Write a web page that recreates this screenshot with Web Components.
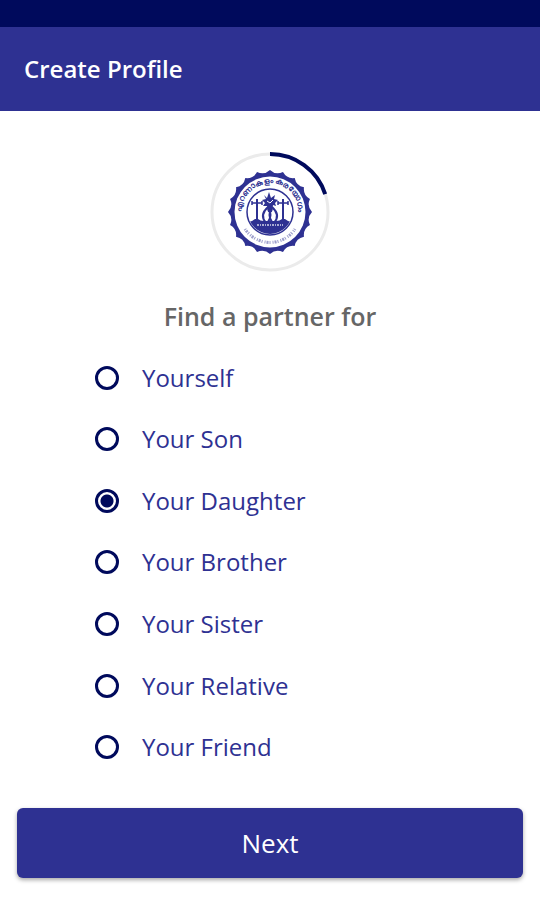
<!DOCTYPE html>
<html lang="en">
<head>
<meta charset="utf-8">
<meta name="viewport" content="width=device-width, initial-scale=1">
<title>Create Profile</title>
<style>
html, body {
  height: 100%;
}

body {
  margin: 0;
  background: #fff;
  font-family: "Open Sans", "Noto Sans", sans-serif;
}
</style>
</head>
<body>
<profile-page>
  <app-bar slot="header">Create Profile</app-bar>
  <progress-seal></progress-seal>
  <partner-form legend="Find a partner for">
    <radio-option>Yourself</radio-option>
    <radio-option>Your Son</radio-option>
    <radio-option checked>Your Daughter</radio-option>
    <radio-option>Your Brother</radio-option>
    <radio-option>Your Sister</radio-option>
    <radio-option>Your Relative</radio-option>
    <radio-option>Your Friend</radio-option>
  </partner-form>
  <primary-button slot="footer">Next</primary-button>
</profile-page>

<script>
class BaseElement extends HTMLElement {
  constructor() {
    super();
    const template = document.createElement('template');
    template.innerHTML = this.constructor.html;
    this.attachShadow({mode: 'open'});
    this.shadowRoot.appendChild(template.content.cloneNode(true));
  }
}

class ProfilePage extends BaseElement {
  static html = `
<style>
:host {
  display: flex;
  flex-direction: column;
  min-height: 100%;
  --primary: #2e3192;
  --primary-dark: #000a5c;
}

main {
  display: flex;
  flex: 1;
  flex-direction: column;
  padding-top: 41px;
}

footer {
  padding: 30px 17px 22px;
}
</style>
<slot name="header"></slot>
<main><slot></slot></main>
<footer><slot name="footer"></slot></footer>
`;
}

class AppBar extends BaseElement {
  static html = `
<style>
:host {
  display: block;
  background: var(--primary);
  border-top: 27px solid var(--primary-dark);
}

header {
  display: flex;
  align-items: center;
  padding: 26px 24px;
}

h1 {
  margin: 0;
  color: #fff;
  font-size: 24px;
  font-weight: 600;
  line-height: 32px;
}
</style>
<header><h1><slot></slot></h1></header>
`;
}

class ProgressSeal extends BaseElement {
  static html = `
<style>
:host {
  display: flex;
  justify-content: center;
}

svg {
  width: 120px;
  height: 120px;
  fill: none;
}

text {
  fill: var(--primary);
  font-size: 8px;
  font-weight: 700;
}
</style>
<svg viewBox="-60 -60 120 120" role="img" aria-label="Profile 20% complete">
  <defs>
    <path id="arc" d="M-27 9 A28.500 28.500 0 1 1 27 9"/>
    <clipPath id="disc"><circle r="22"/></clipPath>
  </defs>
  <circle r="58" stroke="#ebebeb" stroke-width="3"/>
  <path d="M0 -58 A58 58 0 0 1 55.200 -17.900" stroke="var(--primary-dark)" stroke-width="4"/>
  <path id="edge" fill="var(--primary)"/>
  <circle r="35.500" fill="#fff"/>
  <text><textPath href="#arc" startOffset="50%" text-anchor="middle">എറണാകുളം കരയോഗം</textPath></text>
  <path d="M-25 17 A30 30 0 0 0 25 17" stroke="#9c9ecb" stroke-width="3" stroke-dasharray="1 1 2 1 1 2"/>
  <circle r="23" fill="#fff" stroke="var(--primary)" stroke-width="1.500"/>
  <g clip-path="url(#disc)">
    <path fill="var(--primary)" d="M-23 10 Q-18 10 -15 7 L-12 7 Q-10 9 -6 9 L6 9 Q10 9 12 7 L15 7 Q18 10 23 10 V24 H-23Z"/>
    <path stroke="var(--primary)" stroke-width="2" d="M-13 -13V9M13 -13V9"/>
    <path stroke="var(--primary)" stroke-width="1.500" d="M-18 -9H-8M-18 -11V-7M-8 -11V-7M18 -9H8M18 -11V-7M8 -11V-7"/>
    <path stroke="var(--primary)" stroke-width="2" d="M-2 -5 Q-11 3 -4 11M2 -5Q11 3 4 11M-2 -3Q3 3 -2 10M2 -3Q-3 3 2 10"/>
    <path fill="var(--primary)" d="M-6 -17 L-3 -14 L-1 -20 L1 -14 L5 -17 L4 -13 L8 -12 L5 -9 L6 -6 L3 -7 L2 0 L-2 0 L-3 -6 L-7 -6 L-5 -9 L-8 -12 L-4 -13Z"/>
    <path stroke="#fff" stroke-width="1" d="M-3 -11L0 -9L3 -12"/>
    <path stroke="#a9abd3" stroke-width="2" stroke-dasharray="2 1 1 1" d="M-13 13H13"/>
  </g>
</svg>
`;

  constructor() {
    super();
    // scalloped rim, each notch curves inwards between two tips
    const tips = 20;
    const at = (r, i) => {
      const a = i * 2 * Math.PI / tips;
      return `${r * Math.sin(a)} ${-r * Math.cos(a)}`;
    };
    let d = `M${at(42, 0)}`;
    for (let i = 0; i < tips; i++) {
      d += `Q${at(37, i + .5)} ${at(42, i + 1)}`;
    }
    this.shadowRoot.querySelector('#edge').setAttribute('d', `${d}Z`);
  }
}

class PartnerForm extends BaseElement {
  static html = `
<style>
:host {
  display: flex;
  flex: 1;
  flex-direction: column;
}

h2 {
  margin: 0;
  padding: 28px 0 15px;
  color: #666;
  font-size: 25px;
  font-weight: 600;
  line-height: 32px;
  text-align: center;
}

div {
  display: grid;
  flex: 1;
  grid-auto-rows: 1fr;
  padding: 0 16px 0 95px;
}
</style>
<h2 id="legend"></h2>
<div role="radiogroup" aria-labelledby="legend"><slot></slot></div>
`;

  connectedCallback() {
    this.shadowRoot.querySelector('h2').textContent = this.getAttribute('legend');
    this.addEventListener('change-option', e => {
      this.querySelectorAll('radio-option').forEach(option => {
        option.checked = option === e.target;
      });
    });
  }
}

class RadioOption extends BaseElement {
  static html = `
<style>
:host {
  display: flex;
  align-items: center;
}

label {
  display: flex;
  align-items: center;
  gap: 23px;
  color: var(--primary);
  font-size: 24px;
  line-height: 32px;
  cursor: pointer;
}

input {
  appearance: none;
  box-sizing: border-box;
  width: 24px;
  height: 24px;
  margin: 0;
  border: 3px solid var(--primary-dark);
  border-radius: 50%;
}

input:checked {
  background: radial-gradient(circle, var(--primary-dark) 6px, transparent 7px);
}
</style>
<label><input type="radio"><span><slot></slot></span></label>
`;

  connectedCallback() {
    this.checked = this.hasAttribute('checked');
    this.shadowRoot.querySelector('input').addEventListener('change', () => {
      this.dispatchEvent(new CustomEvent('change-option', {bubbles: true}));
    });
  }

  set checked(value) {
    this.shadowRoot.querySelector('input').checked = value;
  }
}

class PrimaryButton extends BaseElement {
  static html = `
<style>
:host {
  display: block;
}

button {
  display: block;
  width: 100%;
  height: 70px;
  padding: 0;
  border: 0;
  border-radius: 6px;
  background: var(--primary);
  box-shadow: 0 2px 4px rgba(0, 0, 0, .35);
  color: #fff;
  font-family: inherit;
  font-size: 26px;
  line-height: 36px;
}
</style>
<button type="button"><slot></slot></button>
`;
}

window.customElements.define('profile-page', ProfilePage);
window.customElements.define('app-bar', AppBar);
window.customElements.define('progress-seal', ProgressSeal);
window.customElements.define('partner-form', PartnerForm);
window.customElements.define('radio-option', RadioOption);
window.customElements.define('primary-button', PrimaryButton);
</script>
</body>
</html>
